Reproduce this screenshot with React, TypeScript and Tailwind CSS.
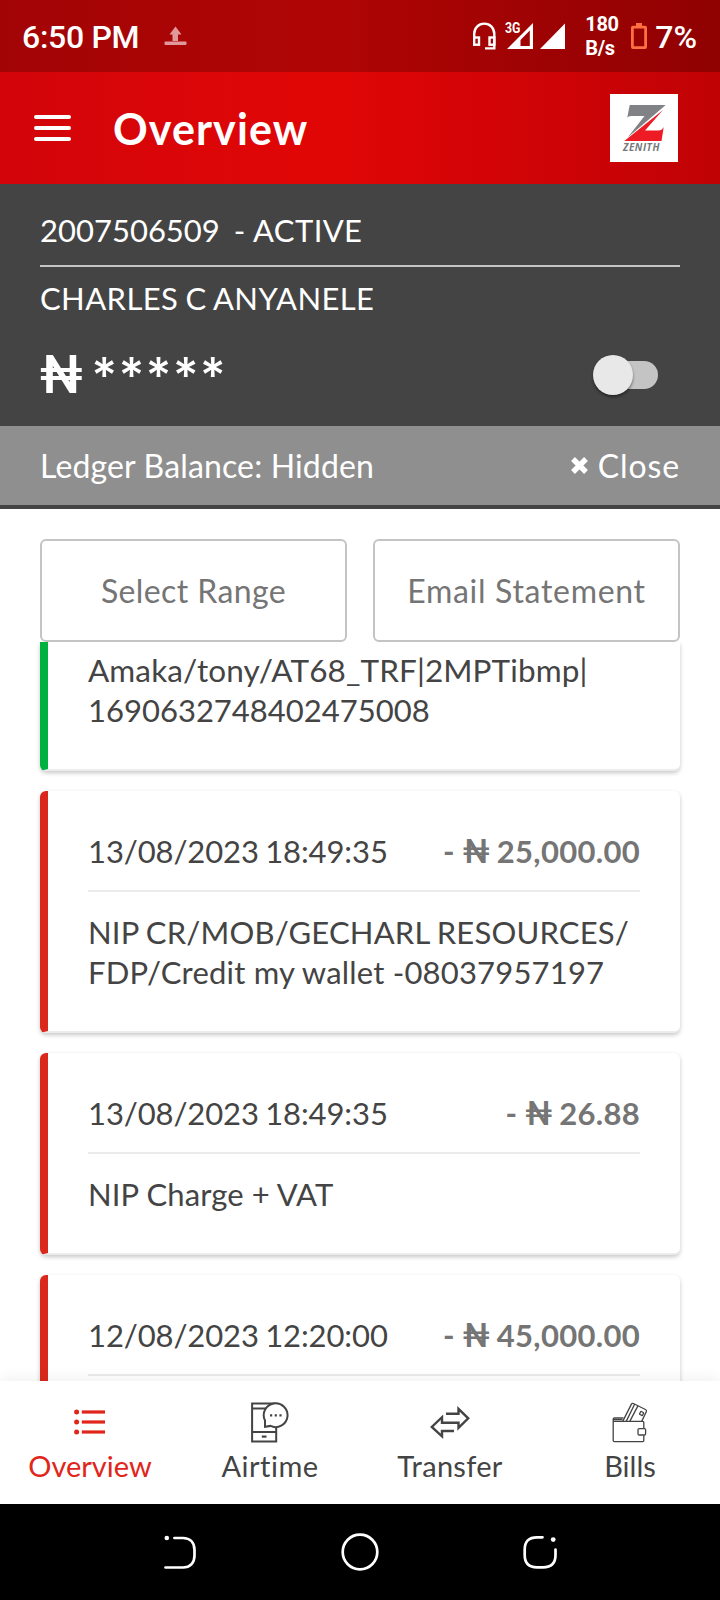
import { ReactNode } from "react";

interface Transaction {
  date?: string;
  amount?: string;
  lines: { text: string; className: string }[];
  type: "credit" | "debit";
}

const TRANSACTIONS: Transaction[] = [
  {
    type: "credit",
    lines: [
      { text: "Amaka/tony/AT68_TRF|2MPTibmp|", className: "text-[31.5px] tracking-[0.1px]" },
      { text: "1690632748402475008", className: "" },
    ],
  },
  {
    type: "debit",
    date: "13/08/2023 18:49:35",
    amount: "25,000.00",
    lines: [
      { text: "NIP CR/MOB/GECHARL RESOURCES/", className: "[word-spacing:-1px] tracking-[0.18px]" },
      { text: "FDP/Credit my wallet -08037957197", className: "tracking-[0.19px]" },
    ],
  },
  {
    type: "debit",
    date: "13/08/2023 18:49:35",
    amount: "26.88",
    lines: [{ text: "NIP Charge + VAT", className: "tracking-[0.1px]" }],
  },
  {
    type: "debit",
    date: "12/08/2023 12:20:00",
    amount: "45,000.00",
    lines: [],
  },
];

function StatusBar() {
  return (
    <div className="flex h-[72px] items-center bg-gradient-to-r from-[#a20405] via-[#b00505] via-45% to-[#900102] pl-[22px] pr-[23px] font-[Roboto] text-white">
      <span className="text-[32px] font-medium leading-none tracking-[-0.3px] pt-[2px]">6:50 PM</span>
      <svg className="ml-[25px]" width="23" height="20" viewBox="0 0 23 20" fill="#e0989a">
        <path d="M11.5 0.5 17.5 8.5H14V15H8.500V8.500H5.500Z" />
        <rect x="0.500" y="15.500" width="22" height="3.500" rx="1" />
      </svg>

      <div className="ml-auto flex items-center">
        {/* Headset */}
        <svg width="25" height="30" viewBox="0 0 25 30" fill="none" stroke="white" strokeWidth="2.400">
          <path d="M2.200 18V13C2.200 7 6.500 2.600 12.300 2.600S22.300 7 22.300 13V27.400H13" />
          <rect x="2.200" y="16.500" width="4.800" height="7.200" />
          <rect x="17.500" y="16.500" width="4.800" height="7.200" />
        </svg>

        {/* Mobile signal */}
        <div className="relative ml-[8px] h-[26px] w-[28px]">
          <svg width="28" height="26" viewBox="0 0 28 26" fill="white">
            <path fillRule="evenodd" d="M2 26 28 0V26ZM15.500 23H24.800V7.500L15.500 17Z" />
          </svg>
          <span className="absolute left-0 top-0 origin-left scale-x-[0.85] text-[14.500px] font-bold leading-[12px]">3G</span>
        </div>
        <svg className="ml-[7px]" width="25" height="26" viewBox="0 0 25 26" fill="white">
          <path d="M0 26 25 0.500V26Z" />
        </svg>

        <div className="ml-[20px] w-[34px] text-[20px] font-bold leading-[24px] tracking-[-0.3px]">
          <div>180</div>
          <div>B/s</div>
        </div>

        <svg className="ml-[12px]" width="16" height="26" viewBox="0 0 16 26" fill="none">
          <rect x="5" y="0" width="6" height="4" fill="#ff6e40" />
          <rect x="1.400" y="4.200" width="13.200" height="20.400" rx="0.500" stroke="#ff6e40" strokeWidth="2.800" />
        </svg>
        <span className="ml-[8px] text-[32px] font-medium leading-none pt-[2px]">7%</span>
      </div>
    </div>
  );
}

function BankLogo() {
  return (
    <div className="flex size-[68px] flex-col items-center bg-white">
      <svg width="68" height="48" viewBox="0 0 68 48">
        <path d="M19.700 11H55.700L17.700 43.500 34.500 22H21Q18.500 22 17.300 23.500Z" fill="#808285" />
        <path d="M53 16 35 36.500H48.500Q52 36.500 53.700 33L51.500 47H14.300Z" fill="#ed1c24" />
      </svg>
      <span className="-ml-[5px] font-['Open_Sans'] text-[10px] font-bold italic leading-[11px] tracking-[0.5px] text-[#77787b]">
        ZENITH
      </span>
    </div>
  );
}

function Header() {
  return (
    <header className="flex h-[112px] items-center bg-gradient-to-r from-[#d2050a] via-[#e10606] via-45% to-[#c00205] pl-[34px] pr-[42px]">
      <button className="flex flex-col gap-[7px]">
        <span className="h-[4px] w-[37px] rounded-full bg-white" />
        <span className="h-[4px] w-[37px] rounded-full bg-white" />
        <span className="h-[4px] w-[37px] rounded-full bg-white" />
      </button>
      <h1 className="ml-[42px] flex-1 text-[43px] font-bold leading-none tracking-[1.1px] text-white">Overview</h1>
      <BankLogo />
    </header>
  );
}

function AccountPanel() {
  return (
    <section className="h-[325px] bg-[#444444] text-white">
      <div className="px-10">
        <div className="flex h-[83px] items-center whitespace-pre border-b-2 border-[#c4c4c4] pt-[11px]">
          <span>2007506509</span>
          <span className="ml-[14px] tracking-[0.4px]">- ACTIVE</span>
        </div>
        <div className="flex h-[62px] items-center pt-px tracking-[0.4px] [word-spacing:-1px]">CHARLES C ANYANELE</div>
        <div className="flex h-[97px] items-center pb-[5px]">
          <span className="font-[Roboto] text-[53px] font-medium leading-none">₦</span>
          <span className="ml-[9px] font-[Inter] text-[49px] font-medium leading-none tracking-[1.6px]">*****</span>
          {/* Show balance toggle */}
          <div className="relative ml-auto mr-[22px] h-[28px] w-[64px] rounded-full bg-[#c4c4c4]">
            <span className="absolute -left-[1px] -top-[6px] size-[40px] rounded-full bg-[#e8e8e8] shadow-[0_2px_3px_rgba(0,0,0,0.45)]" />
          </div>
        </div>
      </div>
      <div className="flex h-[79px] items-center justify-between bg-[#8f8f8f] px-10 text-[32px]">
        <span className="tracking-[0.15px]">Ledger Balance: Hidden</span>
        <span className="flex items-center gap-[10px]">
          <svg width="17" height="17" viewBox="0 0 17 17" stroke="white" strokeWidth="5.400">
            <path d="M2 2 15 15M15 2 2 15" />
          </svg>
          <span className="tracking-[0.9px]">Close</span>
        </span>
      </div>
    </section>
  );
}

function Naira() {
  return <span className="ml-[8px] mr-[7px] font-[Roboto] text-[33px] font-medium leading-none">₦</span>;
}

function TransactionCard({ tx }: { tx: Transaction }) {
  const credit = tx.type === "credit";
  return (
    <div
      className={
        "border-b-2 border-l-8 border-b-[#ececec] bg-white pr-10 pl-10 pb-10 shadow-[0_2px_4px_rgba(0,0,0,0.22)] " +
        (credit ? "rounded-b-[6px] border-l-[#00b140] pt-[7px]" : "rounded-[6px] border-l-[#da291c] pt-[39px]")
      }
    >
      {tx.date && (
        <div className="mb-[19px] flex h-[62px] items-center justify-between border-b-2 border-[#ebebeb] pt-[2px] pb-5">
          <span className="tracking-[-0.1px] [word-spacing:-1.5px]">{tx.date}</span>
          <span className="flex items-center font-bold tracking-[0.3px] text-[#757575]">
            -<Naira />
            {tx.amount}
          </span>
        </div>
      )}
      {tx.lines.map((line) => (
        <div key={line.text} className={"h-10 whitespace-nowrap leading-[42px] " + line.className}>
          {line.text}
        </div>
      ))}
    </div>
  );
}

function NavItem({ icon, label, className }: { icon: ReactNode; label: string; className: string }) {
  return (
    <div className={"flex flex-col items-center pt-[21px] text-[29px] " + className}>
      {icon}
      <span className="mt-[6px] leading-[34px]">{label}</span>
    </div>
  );
}

function ListIcon() {
  return (
    <svg width="40" height="41" viewBox="0 0 40 41" fill="currentColor">
      {[10, 20, 30].map((y) => (
        <g key={y}>
          <circle cx="6.600" cy={y} r="2.500" />
          <rect x="11.800" y={y - 1.600} width="23.200" height="3.200" />
        </g>
      ))}
    </svg>
  );
}

function AirtimeIcon() {
  return (
    <svg width="40" height="41" viewBox="0 0 40 41" fill="none" stroke="currentColor" strokeWidth="2">
      <path d="M26 1.400H2.100V39.500H26.200V25M2.100 6.500H18M2.100 30H26.200" />
      <path d="M11.800 34.600H16.500" strokeWidth="2.200" />
      <path d="M15 24.800V18.500A11.900 11.900 0 1 1 20.500 23.900Z" fill="white" />
      <path d="M20 13.300H22.200M24.700 13.300H26.900M29.400 13.300H31.600" strokeWidth="2.200" />
    </svg>
  );
}

function TransferIcon() {
  return (
    <svg width="40" height="41" viewBox="0 0 40 41" fill="none" stroke="currentColor" strokeWidth="2.400">
      <path d="M16 11.700H28.500V6.800L38.200 16.300 28.500 25.800V20.700H12V15.200L1.800 24.900 12 34.300V29H24" />
    </svg>
  );
}

function BillsIcon() {
  return (
    <svg width="40" height="41" viewBox="0 0 40 41" fill="none" stroke="currentColor" strokeWidth="1.300" strokeLinejoin="round">
      <path d="M33.800 33.200V38.500Q33.800 39.600 32.800 39.600H4.300Q3.200 39.600 3.200 38.500V17Q3.200 15.800 4.500 15.800H13.500M3.200 19.400H32.800Q33.800 19.400 33.800 20.500V26.500M3.500 17.500H12.500" />
      <rect x="28" y="26.600" width="7.600" height="6.400" rx="1.200" />
      <path d="M12.700 19.400 21.300 2.400Q22 1 23.400 1.500L35.400 7.500Q37 8.300 36.300 9.700L31.700 19.400M16.200 19.400 24.600 2.200M19.800 19.400 27.900 3.900" />
      <rect x="30" y="9.800" width="3.300" height="3.300" rx="0.600" transform="rotate(27 31.600 11.400)" />
    </svg>
  );
}

function BottomNav() {
  return (
    <nav className="relative grid h-[123px] grid-cols-4 bg-white text-[#444444] shadow-[0_0_16px_rgba(0,0,0,0.08)]">
      <NavItem icon={<ListIcon />} label="Overview" className="text-[#e1251b]" />
      <NavItem icon={<AirtimeIcon />} label="Airtime" className="tracking-[0.5px]" />
      <NavItem icon={<TransferIcon />} label="Transfer" className="tracking-[0.3px]" />
      <NavItem icon={<BillsIcon />} label="Bills" className="" />
    </nav>
  );
}

function SystemBar() {
  return (
    <div className="relative flex h-24 items-center justify-between bg-black px-[162px]">
      <svg width="36" height="36" viewBox="0 0 36 36" fill="none" stroke="white" strokeWidth="2.700" strokeLinecap="round">
        <circle cx="4.800" cy="4" r="2.300" fill="white" stroke="none" />
        <path d="M12.400 4H21C28 4 32.500 8.500 32.500 16V21.500C32.500 29 28 33.500 21 33.500H3.500" />
      </svg>
      <svg width="38" height="38" viewBox="0 0 38 38" fill="none" stroke="white" strokeWidth="2.700">
        <circle cx="19" cy="19" r="17.300" />
      </svg>
      <svg width="36" height="36" viewBox="0 0 36 36" fill="none" stroke="white" strokeWidth="2.700" strokeLinecap="round">
        <path d="M20.500 3.300H15Q2.700 3.300 2.700 15.500V21Q2.700 33.300 15 33.300H21Q33.500 33.300 33.500 21V15.500" />
        <circle cx="31.200" cy="5.600" r="2.400" fill="white" stroke="none" />
      </svg>
    </div>
  );
}

export default function App() {
  return (
    <div className="flex h-[1600px] w-[720px] flex-col overflow-hidden bg-white font-[Lato,sans-serif] text-[31px] leading-none text-[#444444]">
      <StatusBar />
      <Header />
      <AccountPanel />

      <div className="mt-[30px] grid grid-cols-2 gap-[26px] px-10 text-[32px] text-[#757575]">
        <button className="h-[103px] rounded-[6px] border-2 border-[#c4c4c4] tracking-[0.4px]">Select Range</button>
        <button className="h-[103px] rounded-[6px] border-2 border-[#c4c4c4] tracking-[0.7px]">Email Statement</button>
      </div>

      <div className="flex min-h-0 flex-1 flex-col gap-5 overflow-hidden px-10">
        {TRANSACTIONS.map((tx, i) => (
          <TransactionCard key={i} tx={tx} />
        ))}
      </div>

      <BottomNav />
      <SystemBar />
    </div>
  );
}
